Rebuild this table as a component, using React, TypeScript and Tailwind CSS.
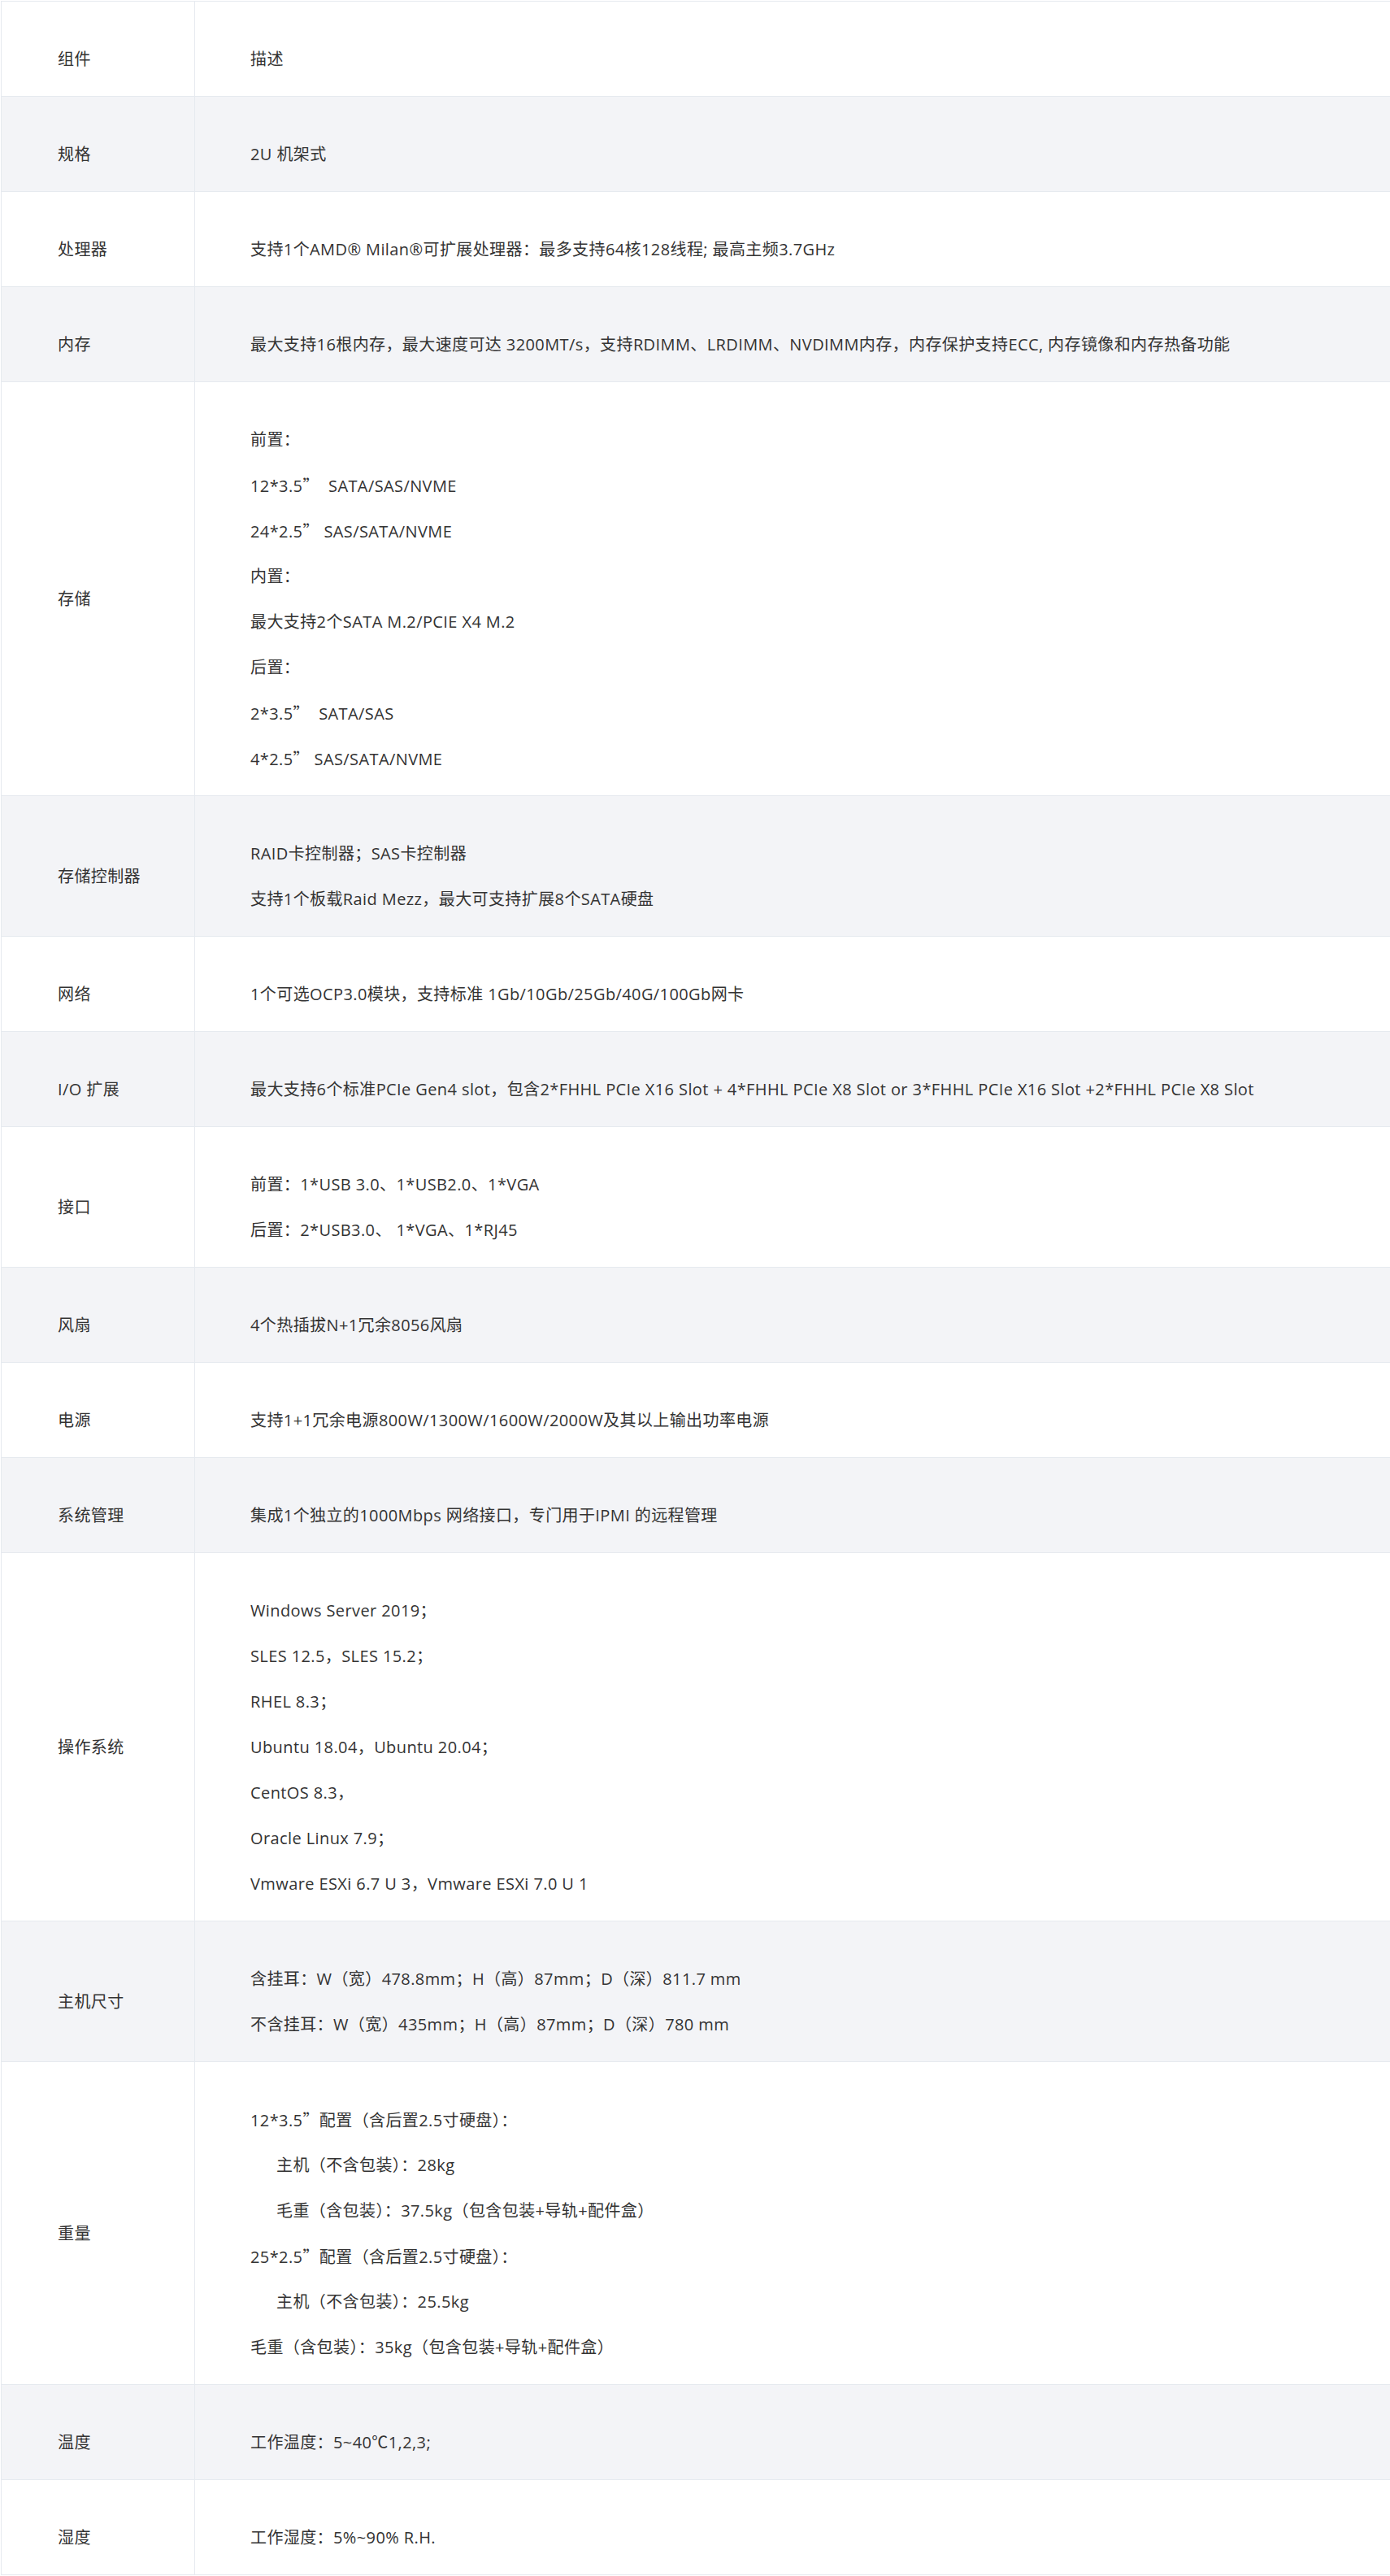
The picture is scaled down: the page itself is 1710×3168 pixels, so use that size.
const rows: { label: string; lines: (string | { text: string; indent?: boolean })[] }[] = [
  { label: '组件', lines: ['描述'] },
  { label: '规格', lines: ['2U 机架式'] },
  { label: '处理器', lines: ['支持1个AMD® Milan®可扩展处理器：最多支持64核128线程; 最高主频3.7GHz'] },
  {
    label: '内存',
    lines: ['最大支持16根内存，最大速度可达 3200MT/s，支持RDIMM、LRDIMM、NVDIMM内存，内存保护支持ECC, 内存镜像和内存热备功能'],
  },
  {
    label: '存储',
    lines: [
      '前置：',
      '12*3.5”  SATA/SAS/NVME',
      '24*2.5” SAS/SATA/NVME',
      '内置：',
      '最大支持2个SATA M.2/PCIE X4 M.2',
      '后置：',
      '2*3.5”  SATA/SAS',
      '4*2.5” SAS/SATA/NVME',
    ],
  },
  { label: '存储控制器', lines: ['RAID卡控制器；SAS卡控制器', '支持1个板载Raid Mezz，最大可支持扩展8个SATA硬盘'] },
  { label: '网络', lines: ['1个可选OCP3.0模块，支持标准 1Gb/10Gb/25Gb/40G/100Gb网卡'] },
  {
    label: 'I/O 扩展',
    lines: [
      '最大支持6个标准PCIe Gen4 slot，包含2*FHHL PCIe X16 Slot + 4*FHHL PCIe X8 Slot or 3*FHHL PCIe X16 Slot +2*FHHL PCIe X8 Slot',
    ],
  },
  { label: '接口', lines: ['前置：1*USB 3.0、1*USB2.0、1*VGA', '后置：2*USB3.0、 1*VGA、1*RJ45'] },
  { label: '风扇', lines: ['4个热插拔N+1冗余8056风扇'] },
  { label: '电源', lines: ['支持1+1冗余电源800W/1300W/1600W/2000W及其以上输出功率电源'] },
  { label: '系统管理', lines: ['集成1个独立的1000Mbps 网络接口，专门用于IPMI 的远程管理'] },
  {
    label: '操作系统',
    lines: [
      'Windows Server 2019；',
      'SLES 12.5，SLES 15.2；',
      'RHEL 8.3；',
      'Ubuntu 18.04，Ubuntu 20.04；',
      'CentOS 8.3，',
      'Oracle Linux 7.9；',
      'Vmware ESXi 6.7 U 3，Vmware ESXi 7.0 U 1',
    ],
  },
  {
    label: '主机尺寸',
    lines: [
      '含挂耳：W（宽）478.8mm；H（高）87mm；D（深）811.7 mm',
      '不含挂耳：W（宽）435mm；H（高）87mm；D（深）780 mm',
    ],
  },
  {
    label: '重量',
    lines: [
      '12*3.5”配置（含后置2.5寸硬盘）：',
      { text: '主机（不含包装）：28kg', indent: true },
      { text: '毛重（含包装）：37.5kg（包含包装+导轨+配件盒）', indent: true },
      '25*2.5”配置（含后置2.5寸硬盘）：',
      { text: '主机（不含包装）：25.5kg', indent: true },
      '毛重（含包装）：35kg（包含包装+导轨+配件盒）',
    ],
  },
  { label: '温度', lines: ['工作温度：5~40℃1,2,3;'] },
  { label: '湿度', lines: ['工作湿度：5%~90% R.H.'] },
]

// the closing quote is full width in the original, so take it from the CJK font
const renderText = (text: string) =>
  text.split('”').map((part, i) => (
    <span key={i}>
      {i > 0 && <span className="font-['Noto_Sans_CJK_SC',sans-serif]">”</span>}
      {part}
    </span>
  ))

const App = () => {
  return (
    <div className="min-h-screen bg-white pl-[1px] pt-[1px] font-['Open_Sans','Noto_Sans_CJK_SC',sans-serif] text-[20px] tracking-[0.4px] text-[#333]">
      <div className="border-l border-t border-[#e6eaef]">
        {rows.map((row, index) => (
          <div
            key={index}
            className={`flex border-b border-[#e6eaef] ${index % 2 === 1 ? 'bg-[#f3f4f7]' : 'bg-white'}`}
          >
            <div className="flex w-[238px] shrink-0 items-center border-r border-[#e6eaef] pb-[27px] pl-[69px] pt-[33px]">
              <p className="mt-[20px] h-[36px] whitespace-pre leading-[36px]">{row.label}</p>
            </div>
            <div className="flex-1 pb-[27px] pl-[68px] pt-[33px]">
              {row.lines.map((line, i) => {
                const text = typeof line === 'string' ? line : line.text
                const indent = typeof line !== 'string' && line.indent
                return (
                  <p key={i} className={`mt-[20px] h-[36px] whitespace-pre leading-[36px] ${indent ? 'pl-[32px]' : ''}`}>
                    {renderText(text)}
                  </p>
                )
              })}
            </div>
          </div>
        ))}
      </div>
    </div>
  )
}

export default App
